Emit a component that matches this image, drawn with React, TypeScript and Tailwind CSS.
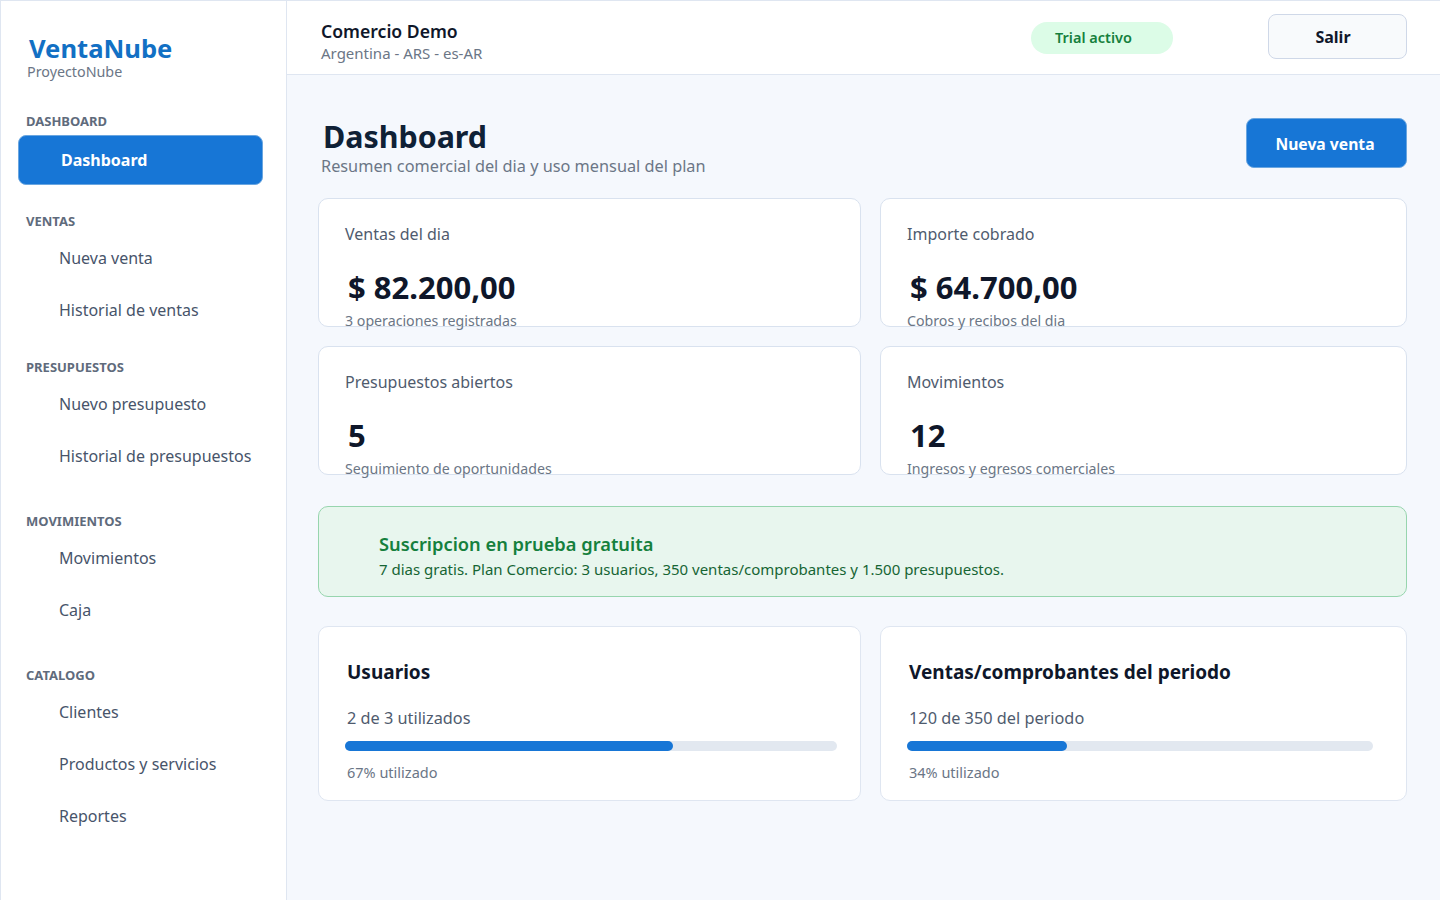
const sections = [
  { title: 'DASHBOARD', mt: 'mt-[33px]', gap: 'mt-[6px]', items: ['Dashboard'] },
  { title: 'VENTAS', mt: 'mt-[28px]', gap: 'mt-[4px]', items: ['Nueva venta', 'Historial de ventas'] },
  { title: 'PRESUPUESTOS', mt: 'mt-[24px]', gap: 'mt-[4px]', items: ['Nuevo presupuesto', 'Historial de presupuestos'] },
  { title: 'MOVIMIENTOS', mt: 'mt-[32px]', gap: 'mt-[4px]', items: ['Movimientos', 'Caja'] },
  { title: 'CATALOGO', mt: 'mt-[32px]', gap: 'mt-[4px]', items: ['Clientes', 'Productos y servicios', 'Reportes'] },
];

const stats = [
  { label: 'Ventas del dia', value: '$ 82.200,00', note: '3 operaciones registradas' },
  { label: 'Importe cobrado', value: '$ 64.700,00', note: 'Cobros y recibos del dia' },
  { label: 'Presupuestos abiertos', value: '5', note: 'Seguimiento de oportunidades' },
  { label: 'Movimientos', value: '12', note: 'Ingresos y egresos comerciales' },
];

function Sidebar() {
  return (
    <aside className="w-[286px] shrink-0 bg-white border-r border-[#dfe6f1] pt-[35px]">
      <div className="pl-[28px] text-[25.6px] leading-[26px] font-bold text-[#1270c4]">VentaNube</div>
      <div className="mt-[1px] pl-[26px] text-[14.3px] leading-[17px] text-[#6b7686]">ProyectoNube</div>
      <nav className="pl-[17px] pr-[23px]">
        {sections.map((s) => (
          <div key={s.title} className={s.mt}>
            <div className="pl-[8px] text-[13px] leading-[16px] font-bold text-[#5f6b7c]">{s.title}</div>
            <div className={`${s.gap} flex flex-col gap-[2px]`}>
              {s.items.map((item) =>
                item === 'Dashboard' ? (
                  <div key={item} className="h-[50px] pl-[42px] flex items-center rounded-lg border border-[#6aa6e0] bg-[#1776d6] text-[16px] font-bold text-white">
                    {item}
                  </div>
                ) : (
                  <div key={item} className="h-[50px] pl-[41px] flex items-center text-[16px] text-[#47546a]">
                    {item}
                  </div>
                )
              )}
            </div>
          </div>
        ))}
      </nav>
    </aside>
  );
}

function StatCard({ label, value, note }: { label: string; value: string; note: string }) {
  return (
    <div className="h-[129px] rounded-[10px] border border-[#d9e2ef] bg-white pl-[26px] pt-[24px]">
      <div className="text-[16px] leading-[22px] text-[#4f5b6e]">{label}</div>
      <div className="mt-[22px] pl-[3px] text-[31px] leading-[40px] font-bold text-[#0f172a]">{value}</div>
      <div className="mt-[5px] text-[14.2px] leading-[18px] text-[#6b7686]">{note}</div>
    </div>
  );
}

function UsageCard({ title, used, pct, note, right }: { title: string; used: string; pct: number; note: string; right: string }) {
  return (
    <div className={`h-[175px] rounded-[10px] border border-[#dfe6f1] bg-white pl-[26px] pt-[32px] ${right}`}>
      <div className="pl-[2px] text-[19px] leading-[26px] font-bold text-[#0f172a]">{title}</div>
      <div className="mt-[21px] pl-[2px] text-[16.3px] leading-[24px] text-[#4f5b6e]">{used}</div>
      <div className="mt-[11px] h-[10px] rounded-full bg-[#e2e8f0]">
        <div className="h-full rounded-full bg-[#1776d6]" style={{ width: `${pct}%` }} />
      </div>
      <div className="mt-[11px] pl-[2px] text-[14.5px] leading-[20px] text-[#6b7686]">{note}</div>
    </div>
  );
}

export default function App() {
  return (
    <div className="h-[900px] overflow-hidden flex bg-[#f5f8fd] border-l border-t border-[#dfe6f1] font-['Noto_Sans',sans-serif]">
      <Sidebar />
      <div className="flex-1">
        <header className="h-[74px] bg-white border-b border-[#dfe6f1] flex items-center pl-[34px] pr-[33px]">
          <div className="pt-[9px]">
            <div className="text-[17.6px] leading-[22px] font-semibold text-[#0f172a]">Comercio Demo</div>
            <div className="text-[15px] leading-[22px] text-[#6b7686]">Argentina - ARS - es-AR</div>
          </div>
          <div className="ml-auto mr-[95px] w-[142px] h-[32px] pl-[24px] flex items-center rounded-full bg-[#dcfce7] text-[14.5px] font-semibold text-[#15803d]">
            Trial activo
          </div>
          <div className="w-[139px] h-[45px] mb-[2px] pr-[9px] flex items-center justify-center rounded-lg border border-[#cfd8e8] bg-[#f8fafc] text-[16px] font-bold text-[#0f172a]">
            Salir
          </div>
        </header>
        <main className="pl-[31px] pr-[33px]">
          <div className="flex items-start justify-between pt-[43px]">
            <div>
              <h1 className="pt-[1px] pl-[5px] text-[30.4px] leading-[35px] font-bold text-[#0f2136]">Dashboard</h1>
              <p className="pl-[3px] text-[16.3px] leading-[24px] text-[#6b7686]">Resumen comercial del dia y uso mensual del plan</p>
            </div>
            <div className="w-[161px] h-[50px] pt-[3px] pr-[3px] flex items-center justify-center rounded-lg border border-[#6aa6e0] bg-[#1776d6] text-[15.7px] font-bold text-white">
              Nueva venta
            </div>
          </div>
          <div className="mt-[20px] grid grid-cols-[543px_527px] gap-x-[19px] gap-y-[19px]">
            {stats.map((s) => (
              <StatCard key={s.label} {...s} />
            ))}
          </div>
          <div className="mt-[31px] h-[91px] rounded-[10px] border border-[#97d5ae] bg-[#e8f6ee] pl-[60px] pt-[24px]">
            <div className="text-[18.3px] leading-[26px] font-semibold text-[#15803d]">Suscripcion en prueba gratuita</div>
            <div className="text-[15px] leading-[24px] text-[#166534]">
              7 dias gratis. Plan Comercio: 3 usuarios, 350 ventas/comprobantes y 1.500 presupuestos.
            </div>
          </div>
          <div className="mt-[29px] grid grid-cols-[543px_527px] gap-x-[19px]">
            <UsageCard title="Usuarios" used="2 de 3 utilizados" pct={66.7} note="67% utilizado" right="pr-[23px]" />
            <UsageCard title="Ventas/comprobantes del periodo" used="120 de 350 del periodo" pct={34.3} note="34% utilizado" right="pr-[33px]" />
          </div>
        </main>
      </div>
    </div>
  );
}
